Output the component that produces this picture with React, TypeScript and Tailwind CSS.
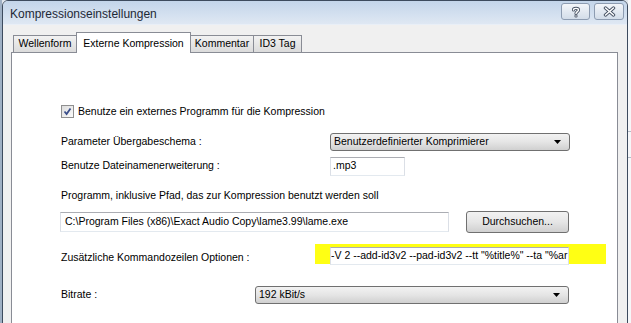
import React from 'react';

const font = { fontFamily: '"Liberation Sans", Arial, sans-serif' };

const HelpGlyph = () => (
  <svg width="12" height="12" viewBox="0 0 12 12">
    <path d="M3.5 4 C3.5 1.8 8.5 1.8 8.5 4 C8.5 5.6 6 5.6 6 7.5" fill="none" stroke="#4a5566" strokeWidth="3.2" strokeLinecap="round" />
    <path d="M3.5 4 C3.5 1.8 8.5 1.8 8.5 4 C8.5 5.6 6 5.6 6 7.5" fill="none" stroke="#fff" strokeWidth="1.4" strokeLinecap="round" />
    <circle cx="6" cy="10" r="1.6" fill="#4a5566" />
    <circle cx="6" cy="10" r="0.7" fill="#fff" />
  </svg>
);

const CloseGlyph = () => (
  <svg width="13" height="11" viewBox="0 0 13 11">
    <path d="M2.5 2 L10.5 9 M10.5 2 L2.5 9" stroke="#4a5566" strokeWidth="3.4" strokeLinecap="round" />
    <path d="M2.5 2 L10.5 9 M10.5 2 L2.5 9" stroke="#fff" strokeWidth="1.5" strokeLinecap="round" />
  </svg>
);

const Combo = ({ text, width }: { text: string; width: string }) => (
  <div
    className={`${width} h-[18px] rounded-[3px] border border-[#707070] bg-gradient-to-b from-[#f2f2f2] via-[#e5e5e5] to-[#d0d0d0] flex items-center justify-between pl-[3px] pr-[8px] text-black`}
  >
    <span>{text}</span>
    <svg width="7" height="4" viewBox="0 0 7 4">
      <path d="M0 0 L7 0 L3.5 4 Z" fill="#000" />
    </svg>
  </div>
);

const tabBase =
  'h-[17px] border border-b-0 border-[#898c95] bg-gradient-to-b from-[#f2f2f2] to-[#dbdbdb] flex items-center justify-center whitespace-nowrap';

export default function App() {
  return (
    <div className="w-[631px] h-[323px] overflow-hidden bg-[#dfe5ec] flex" style={font}>
      <div className="w-[2px] h-full bg-[#9fb0c4]" />
      <div className="w-[626px] h-[330px] flex flex-col border border-[#3d4b5e] rounded-t-[6px] overflow-hidden">
        <div className="h-[24px] flex items-center justify-between pl-[7px] pr-[3px] bg-gradient-to-b from-[#c3d5ea] to-[#dfe8f3] border-b border-[#e9eff7]">
          <span className="text-[12px] text-[#1e2836] mt-[2px]">Kompressionseinstellungen</span>
          <div className="flex gap-[4px] mt-[-2px]">
            <div className="w-[29px] h-[17px] rounded-[3px] border border-[#8d9cb1] bg-gradient-to-b from-[#f3f6fa] to-[#d3dde9] flex items-center justify-center">
              <HelpGlyph />
            </div>
            <div className="w-[30px] h-[17px] rounded-[3px] border border-[#8d9cb1] bg-gradient-to-b from-[#f3f6fa] to-[#d3dde9] flex items-center justify-center">
              <CloseGlyph />
            </div>
          </div>
        </div>
        <div className="flex-1 bg-[#f0f0f0] pl-[8px] pt-[7px] flex flex-col text-[10.5px]">
          <div className="flex items-end h-[20px] pl-[2px] text-black">
            <div className={`${tabBase} w-[64px]`}>Wellenform</div>
            <div className="relative z-10 h-[21px] -mb-px border border-b-0 border-[#898c95] bg-white flex items-start justify-center pt-[3px] w-[115px] -ml-px whitespace-nowrap">
              Externe Kompression
            </div>
            <div className={`${tabBase} border-l-0 w-[63px]`}>Kommentar</div>
            <div className={`${tabBase} border-l-0 w-[48px]`}>ID3 Tag</div>
          </div>
          <div className="w-[607px] flex-1 border border-[#898c95] bg-white pl-[49px] flex flex-col text-black">
            <div className="mt-[52px] h-[13px] flex items-center">
              <div className="w-[13px] h-[13px] border border-[#8f8f8f] bg-gradient-to-br from-[#dcdcdc] to-[#fbfbfb] flex items-center justify-center">
                <svg width="9" height="9" viewBox="0 0 9 9">
                  <path d="M1.5 4.5 L3.6 7 L7.5 1.5" fill="none" stroke="#3a4e8a" strokeWidth="1.8" />
                </svg>
              </div>
              <span className="ml-[4px]">Benutze ein externes Programm für die Kompression</span>
            </div>
            <div className="mt-[14px] h-[20px] flex items-center">
              <span className="w-[269px]">Parameter Übergabeschema :</span>
              <Combo text="Benutzerdefinierter Komprimierer" width="w-[240px]" />
            </div>
            <div className="mt-[4px] h-[20px] flex items-center">
              <span className="w-[269px]">Benutze Dateinamenerweiterung :</span>
              <div className="w-[75px] h-[19px] border border-[#abadb3] border-b-[#e3e9ef] border-x-[#dbdfe6] flex items-center pl-[2px]">.mp3</div>
            </div>
            <div className="mt-[13px] h-[13px] flex items-center">Programm, inklusive Pfad, das zur Kompression benutzt werden soll</div>
            <div className="mt-[9px] h-[22px] flex items-center -ml-px">
              <div className="w-[389px] h-[20px] border border-[#abadb3] border-b-[#e3e9ef] border-x-[#dbdfe6] flex items-center pl-[4px] whitespace-nowrap overflow-hidden">
                {"C:\\Program Files (x86)\\Exact Audio Copy\\lame3.99\\lame.exe"}
              </div>
              <div className="ml-[17px] w-[103px] h-[22px] rounded-[3px] border border-[#707070] bg-gradient-to-b from-[#f2f2f2] via-[#e6e6e6] to-[#d0d0d0] flex items-center justify-center">
                Durchsuchen...
              </div>
            </div>
            <div className="mt-[11px] h-[21px] flex items-start">
              <span className="w-[254px] mt-[6px]">Zusätzliche Kommandozeilen Optionen :</span>
              <div className="w-[291px] h-[20px] bg-[#ffff14] pl-[15px] pt-[3px]">
                <div className="w-[239px] h-[18px] bg-white border border-[#abadb3] border-b-[#e3e9ef] border-x-[#dbdfe6] flex items-center whitespace-nowrap overflow-hidden">
                  -V 2 --add-id3v2 --pad-id3v2 --tt "%title%" --ta "%ar
                </div>
              </div>
            </div>
            <div className="mt-[20px] h-[19px] flex items-center">
              <span className="w-[194px]">Bitrate :</span>
              <Combo text="192 kBit/s" width="w-[314px]" />
            </div>
          </div>
        </div>
      </div>
      <div className="flex-1 h-full bg-[#f6f7f9] flex flex-col">
        <div className="mt-[131px] h-px bg-[#b5bcc6]" />
        <div className="mt-[25px] h-px bg-[#b5bcc6]" />
      </div>
    </div>
  );
}
